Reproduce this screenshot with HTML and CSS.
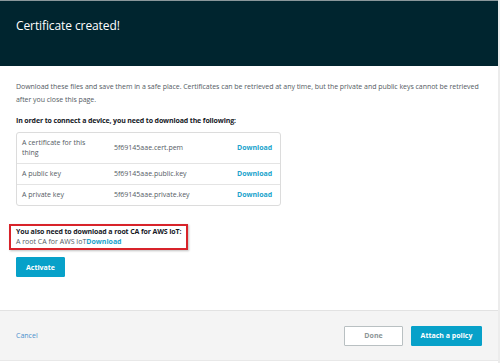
FILE: index.html
```html
<!DOCTYPE html>
<html lang="en">
<head>
    <meta charset="UTF-8">
    <title>Certificate created</title>
    <link rel="stylesheet" href="styles.css">
</head>
<body>
    <div class="modal">
        <div class="header">
            <h1>Certificate created!</h1>
        </div>
        <div class="content">
            <p class="intro">Download these files and save them in a safe place. Certificates can be retrieved at any time, but the private and public keys cannot be retrieved after you close this page.</p>
            <p class="lead">In order to connect a device, you need to download the following:</p>
            <div class="files">
                <div class="row">
                    <span class="name">A certificate for this thing</span>
                    <span class="file">5f69145aae.cert.pem</span>
                    <a class="dl" href="#">Download</a>
                </div>
                <div class="row">
                    <span class="name">A public key</span>
                    <span class="file">5f69145aae.public.key</span>
                    <a class="dl" href="#">Download</a>
                </div>
                <div class="row">
                    <span class="name">A private key</span>
                    <span class="file">5f69145aae.private.key</span>
                    <a class="dl" href="#">Download</a>
                </div>
            </div>
            <div class="rootca">
                <p class="lead">You also need to download a root CA for AWS IoT:</p>
                <p>A root CA for AWS IoT<a class="dl" href="#">Download</a></p>
            </div>
            <button class="btn primary activate">Activate</button>
        </div>
        <div class="footer">
            <a class="cancel" href="#">Cancel</a>
            <div class="actions">
                <button class="btn done">Done</button>
                <button class="btn primary attach">Attach a policy</button>
            </div>
        </div>
    </div>
</body>
</html>
```
FILE: styles.css
```css
*{
    margin: 0;padding: 0;
    box-sizing: border-box;
}
body{
    width: 500px;
    height: 363px;
    background: #fff;
    font-family: "Open Sans", "Liberation Sans", sans-serif;
    font-size: 7px;
    color: #545b64;
    overflow: hidden;
}
.modal{
    width: 500px;
    height: 363px;
    display: flex;
    flex-direction: column;
    border-right: 2px solid #ececec;
}
.header{
    height: 66px;
    background: #00252f;
    border-top: 1px solid #8a979b;
    padding: 17px 16px 0;
}
.header h1{
    font-size: 12px;
    font-weight: 400;
    color: #fff;
    line-height: 16px;
    letter-spacing: -0.1px;
}
.content{
    flex: 1;
    padding: 14px 16px 0;
}
.intro{
    line-height: 13px;
    max-width: 470px;
    letter-spacing: -0.04px;
}
.lead{
    font-weight: 700;
    color: #16191f;
    line-height: 13px;
    letter-spacing: -0.13px;
}
.content > .lead{
    margin-top: 8px;
}
.files{
    margin-top: 5px;
    width: 265px;
    border: 1px solid #dcdcdc;
    border-radius: 3px;
}
.row{
    display: grid;
    grid-template-columns: 92px 123px 1fr;
    align-items: center;
    padding: 5px 5px;
    line-height: 10px;
    border-top: 1px solid #e4e4e4;
}
.row:first-child{
    border-top: none;
}
.row .name{
    width: 68px;
}
.dl{
    color: #1aa3cc;
    font-weight: 700;
    text-decoration: none;
}
.rootca{
    margin: 18px 0 0 -7px;
    width: fit-content;
    border: 2px solid #d8232a;
    padding: 1px 5px;
    line-height: 10px;
    box-shadow: 1px 1px 2px rgba(0,0,0,0.25);
}
.rootca .lead{
    line-height: 10px;
}
.btn{
    font-family: inherit;
    font-size: 7px;
    font-weight: 700;
    height: 20px;
    border-radius: 1px;
    cursor: pointer;
}
.primary{
    background: #07a1c9;
    border: 1px solid #07a1c9;
    color: #fff;
}
.activate{
    display: block;
    margin-top: 7px;
    width: 49px;
}
.footer{
    height: 51px;
    margin-bottom: 2px;
    background: #f4f4f4;
    border-top: 1px solid #e2e2e2;
    border-bottom: 1px solid #e8e8e8;
    display: flex;
    align-items: center;
    justify-content: space-between;
    padding: 0 16px;
}
.cancel{
    color: #4a8fcc;
    text-decoration: none;
}
.actions{
    display: flex;
    gap: 8px;
}
.done{
    width: 59px;
    background: #fff;
    border: 1px solid #b9c0c2;
    color: #8b9596;
}
.attach{
    width: 71px;
}
```
